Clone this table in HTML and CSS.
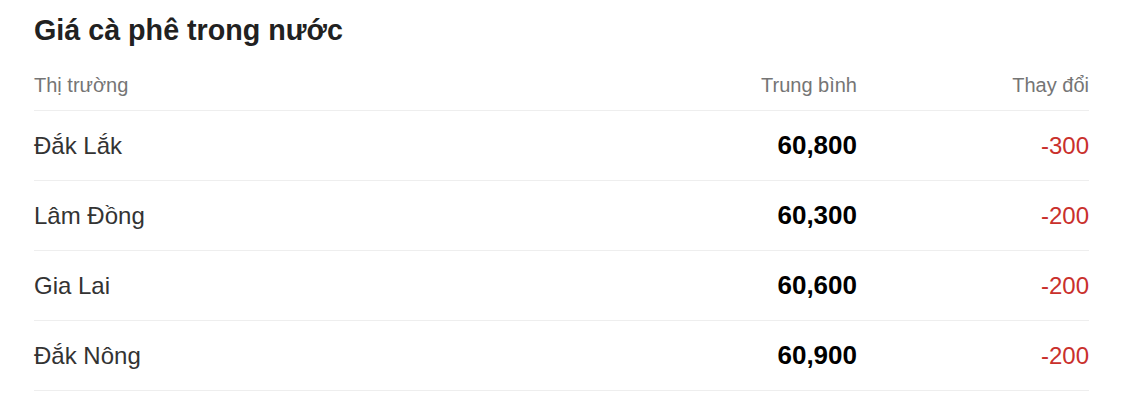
FILE: index.html
```html
<!DOCTYPE html>
<html lang="vi">
<head>
<meta charset="utf-8">
<link rel="stylesheet" href="styles.css">
</head>
<body>
<div class="wrap">
  <h2 class="title">Giá cà phê trong nước</h2>
  <div class="table">
    <div class="row head">
      <div class="c1">Thị trường</div>
      <div class="c2">Trung bình</div>
      <div class="c3">Thay đổi</div>
    </div>
    <div class="row">
      <div class="c1">Đắk Lắk</div>
      <div class="c2 num">60,800</div>
      <div class="c3 down">-300</div>
    </div>
    <div class="row">
      <div class="c1">Lâm Đồng</div>
      <div class="c2 num">60,300</div>
      <div class="c3 down">-200</div>
    </div>
    <div class="row">
      <div class="c1">Gia Lai</div>
      <div class="c2 num">60,600</div>
      <div class="c3 down">-200</div>
    </div>
    <div class="row">
      <div class="c1">Đắk Nông</div>
      <div class="c2 num">60,900</div>
      <div class="c3 down">-200</div>
    </div>
  </div>
</div>
</body>
</html>
```

FILE: styles.css
```css
html, body {
  margin: 0;
  padding: 0;
  background: #fff;
  font-family: "Liberation Sans", Arial, sans-serif;
}
.wrap {
  padding: 14px 0 0 34px;
  width: 1055px;
}
.title {
  margin: 0 0 14px;
  font-size: 28.7px;
  line-height: 32px;
  font-weight: bold;
  color: #212121;
}
.row {
  display: grid;
  grid-template-columns: 1fr 200px 232px;
  align-items: center;
  height: 69px;
  border-bottom: 1px solid #eee;
  font-size: 24px;
  color: #333;
}
.row.head {
  height: 50px;
  font-size: 20px;
  color: #757575;
}
.c2, .c3 {
  text-align: right;
}
.num {
  font-size: 26px;
  font-weight: bold;
  color: #000;
}
.down {
  color: #c9302c;
}
```
